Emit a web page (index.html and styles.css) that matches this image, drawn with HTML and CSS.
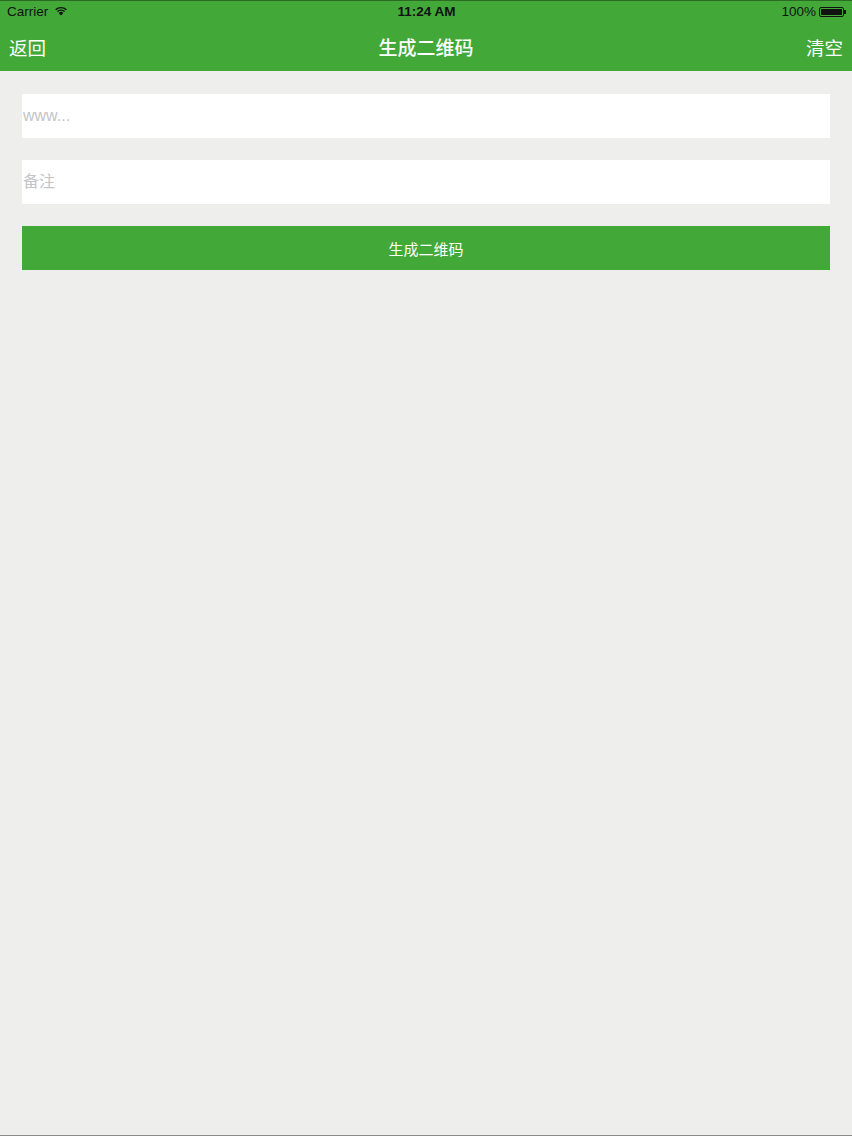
FILE: index.html
```html
<!DOCTYPE html>
<html lang="zh">
<head>
  <meta charset="UTF-8">
  <title>生成二维码</title>
  <link rel="stylesheet" href="styles.css">
</head>
<body>
<div class="header">
  <div class="statusbar">
    <div class="status-left">
      <span>Carrier</span>
      <svg class="wifi" width="14" height="11" viewBox="0 0 14 10">
        <path d="M7 10 L4.6 7.4 A3.4 3.4 0 0 1 9.4 7.4 Z" fill="#111"/>
        <path d="M2.9 5.6 A5.8 5.8 0 0 1 11.1 5.6 L10.1 6.6 A4.4 4.4 0 0 0 3.9 6.6 Z" fill="#111"/>
        <path d="M1.1 3.8 A8.4 8.4 0 0 1 12.9 3.8 L11.9 4.8 A7 7 0 0 0 2.1 4.8 Z" fill="#111"/>
      </svg>
    </div>
    <div class="status-time">11:24 AM</div>
    <div class="status-right">
      <span>100%</span>
      <span class="battery"><span class="battery-fill"></span></span>
      <span class="battery-tip"></span>
    </div>
  </div>
  <div class="navbar">
    <span class="nav-btn">返回</span>
    <span class="nav-title">生成二维码</span>
    <span class="nav-btn">清空</span>
  </div>
</div>

<div class="form">
  <input class="field" type="text" placeholder="www...">
  <input class="field" type="text" placeholder="备注">
  <button class="submit">生成二维码</button>
</div>
</body>
</html>
```

FILE: styles.css
```css
html, body {
  height: 100%;
  margin: 0;
}

body {
  background-color: #eeefed;
  font-family: "Liberation Sans", "Noto Sans CJK SC", sans-serif;
  border-bottom: 1px solid #8a8c88;
  box-sizing: border-box;
}

/* green top area: status bar + nav bar */
.header {
  background-color: #42a938;
  border-top: 1px solid #2c6b26;
  height: 70px;
  display: flex;
  flex-direction: column;
}

.statusbar {
  height: 21px;
  display: flex;
  align-items: center;
  justify-content: space-between;
  padding: 0 6px 0 7px;
  font-size: 13.5px;
  color: #111;
}

.status-left {
  display: flex;
  align-items: center;
  gap: 6px;
  width: 120px;
}

.wifi {
  margin-top: -2px;
}

.status-time {
  font-weight: bold;
  font-size: 13.5px;
}

.status-right {
  display: flex;
  align-items: center;
  justify-content: flex-end;
  width: 120px;
}

.battery {
  width: 25px;
  height: 10px;
  border: 1px solid #111;
  border-radius: 2px;
  margin-left: 3px;
  display: flex;
  padding: 1px;
  box-sizing: border-box;
}

.battery-fill {
  flex: 1;
  background-color: #111;
}

.battery-tip {
  width: 2px;
  height: 4px;
  background-color: #111;
}

.navbar {
  flex: 1;
  display: flex;
  align-items: center;
  justify-content: space-between;
  padding: 0 9px 0 9px;
  color: #fff;
}

.nav-btn {
  font-size: 18.5px;
}

.nav-title {
  font-size: 19px;
  font-weight: 500;
}

/* form */
.form {
  display: flex;
  flex-direction: column;
  gap: 22px;
  padding: 23px 22px 0 22px;
}

.field {
  height: 44px;
  border: none;
  background-color: #fff;
  padding: 0 1px;
  font-size: 16px;
  font-family: "Liberation Sans", "Noto Sans CJK SC", sans-serif;
  outline: none;
}

.field::placeholder {
  color: #c4c4c8;
}

.submit {
  height: 44px;
  border: none;
  background-color: #42a938;
  color: #fff;
  font-size: 15px;
  font-family: "Liberation Sans", "Noto Sans CJK SC", sans-serif;
}
```
